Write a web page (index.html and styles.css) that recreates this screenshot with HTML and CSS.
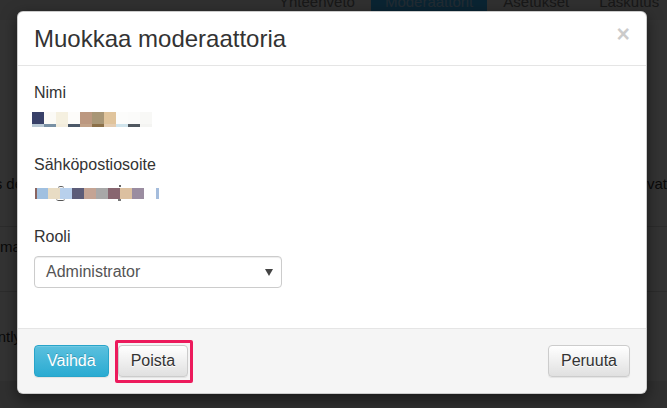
FILE: index.html
```html
<!DOCTYPE html>
<html lang="fi">
<head>
<meta charset="utf-8">
<title>Muokkaa moderaattoria</title>
<link rel="stylesheet" href="styles.css">
</head>
<body>
<div class="page">
  <nav class="topnav">
    <a class="nav-item">Yhteenveto</a>
    <a class="nav-item active">Moderaattorit</a>
    <a class="nav-item">Asetukset</a>
    <a class="nav-item">Laskutus</a>
  </nav>
  <div class="panel">
    <div class="trow head">
      <div class="cell-l to-end"><span>Tilaus de</span></div>
      <div class="cell-r"><span>vat</span></div>
    </div>
    <div class="trow mid">
      <div class="cell-l"><span>maksettu</span></div>
    </div>
    <div class="trow last">
      <div class="cell-l to-end short"><span>Recently</span></div>
    </div>
  </div>
</div>
<div class="backdrop"></div>
<div class="modal">
  <div class="modal-header">
    <h4 class="modal-title">Muokkaa moderaattoria</h4>
    <button class="close" type="button">×</button>
  </div>
  <div class="modal-body">
    <div class="form-group">
      <label>Nimi</label>
      <div class="pix name">
        <span></span><span></span><span></span><span></span><span></span>
        <span></span><span></span><span></span><span></span><span></span>
      </div>
    </div>
    <div class="form-group">
      <label>Sähköpostiosoite</label>
      <div class="pix email">
        <span class="mk"></span>
        <span class="b1"></span><span class="b2"></span><span class="b3"></span><span class="b4"></span><span class="b5"></span>
        <span class="b6"></span><span class="b7"></span><span class="b8"></span><span class="b9"></span><span class="b10"></span>
        <span class="tail"></span>
      </div>
    </div>
    <div class="form-group">
      <label>Rooli</label>
      <div class="select">
        <span>Administrator</span>
        <svg class="caret" width="8" height="7" viewBox="0 0 8 7"><polygon points="0,0 8,0 4,7" fill="#444"/></svg>
      </div>
    </div>
  </div>
  <div class="modal-footer">
    <button class="btn btn-info" type="button">Vaihda</button>
    <button class="btn btn-default marked" type="button">Poista</button>
    <button class="btn btn-default cancel" type="button">Peruuta</button>
  </div>
</div>
</body>
</html>
```
FILE: styles.css
```css
html, body {
  margin: 0;
  padding: 0;
}
body {
  width: 667px;
  height: 408px;
  overflow: hidden;
  position: relative;
  background: #eeeeee;
  font-family: "Liberation Sans", Arial, sans-serif;
  color: #333;
}

/* underlying page */
.page {
  display: flex;
  flex-direction: column;
}
.topnav {
  display: flex;
  height: 36px;
  margin-top: -16px;
  padding-left: 265px;
  font-size: 15px;
  line-height: 36px;
  white-space: nowrap;
}
.nav-item {
  padding: 0 14px;
  margin-right: 2px;
  color: #777;
}
.nav-item.active {
  background: #36b4fa;
  color: #a8d8f8;
}
.panel {
  background: #fff;
  padding-top: 120px;
  font-size: 15px;
}
.trow {
  display: flex;
  border-bottom: 1px solid #ddd;
  white-space: nowrap;
}
.trow.head {
  height: 86px;
  align-items: center;
}
.trow.mid {
  box-sizing: border-box;
  height: 65px;
  padding-top: 9px;
  line-height: 22px;
  align-items: flex-start;
}
.trow.last {
  height: 89px;
  align-items: center;
  border-bottom: 0;
}
.cell-l {
  width: 23px;
  display: flex;
  overflow: hidden;
}
.cell-l.to-end {
  justify-content: flex-end;
}
.cell-l.short {
  width: 21px;
}
.cell-r {
  margin-left: auto;
  width: 20px;
}

.backdrop {
  position: absolute;
  inset: 0;
  background: rgba(0, 0, 0, 0.8);
}

/* modal */
.modal {
  position: absolute;
  left: 17px;
  top: 11px;
  width: 630px;
  box-sizing: border-box;
  background: #fff;
  border: 1px solid rgba(0, 0, 0, 0.2);
  border-radius: 6px;
  box-shadow: 0 5px 15px rgba(0, 0, 0, 0.5);
  color: #333;
  font-size: 16px;
}
.modal-header {
  display: flex;
  justify-content: space-between;
  align-items: flex-start;
  padding: 14px 16px 13px 16px;
  border-bottom: 1px solid #e5e5e5;
}
.modal-title {
  margin: 0;
  font-size: 24px;
  line-height: 26px;
  font-weight: normal;
}
.close {
  border: 0;
  background: none;
  padding: 0;
  margin-top: -3px;
  font: bold 23px/1 "Liberation Sans", Arial, sans-serif;
  color: #000;
  opacity: 0.2;
}
.modal-body {
  display: flex;
  flex-direction: column;
  gap: 27px;
  padding: 16px 16px 40px 16px;
}
.form-group label {
  display: block;
  line-height: 22px;
  margin-bottom: 8px;
}
.pix {
  display: flex;
  height: 15px;
}
.name {
  margin-left: -2px;
}
.name span {
  width: 12px;
  height: 15px;
}
.name span:nth-child(1)  { background: linear-gradient(#384068 12px, #b8c8d4 12px); }
.name span:nth-child(2)  { background: linear-gradient(#fbfaf6 12px, #7890a4 12px); }
.name span:nth-child(3)  { background: linear-gradient(#f5f0e0 12px, #f2ecdc 12px); }
.name span:nth-child(4)  { background: linear-gradient(#fdfcfa 12px, #4c5868 12px); }
.name span:nth-child(5)  { background: linear-gradient(#bc9880 12px, #c2a288 12px); }
.name span:nth-child(6)  { background: linear-gradient(#a89676 12px, #8c7048 12px); }
.name span:nth-child(7)  { background: linear-gradient(#e0c49c 12px, #e4ccb0 12px); }
.name span:nth-child(8)  { background: linear-gradient(#fcfcfb 12px, #d0e4ec 12px); }
.name span:nth-child(9)  { background: linear-gradient(#fbfbfa 12px, #505860 12px); }
.name span:nth-child(10) { background: linear-gradient(#f8f8f6 12px, #f4f4f2 12px); }

.email {
  padding-top: 4px;
  height: 11px;
  margin-left: 1px;
}
.email span {
  width: 12px;
  height: 11px;
}
.email .mk   { width: 2px; background: #8a6460; }
.email .b1   { width: 11px; background: #a0c0e0; }
.email .b2   { background: #e8dcc4; }
.email .b3   { background: #b8d0ec; position: relative; }
.email .b4   { background: #5c5c78; }
.email .b5   { background: #c4a494; }
.email .b6   { background: #a8a8a8; }
.email .b7   { background: #886670; }
.email .b8   { background: #dcc0a0; position: relative; }
.email .b9   { background: #9a8ca0; }
.email .b10  { background: #fefefe; }
.email .tail { width: 3px; background: #a4bcdc; }

/* glyph remnants peeking out of the blurred blocks */
.email .b3::before {
  content: "";
  position: absolute;
  left: -2px;
  top: -2px;
  width: 6px;
  height: 3px;
  border-top: 1px solid #555;
  border-radius: 50% 50% 0 0;
}
.email .b3::after {
  content: "";
  position: absolute;
  left: -4px;
  bottom: -2px;
  width: 9px;
  height: 3px;
  border-bottom: 1px solid #555;
  border-radius: 0 0 50% 50%;
}
.email .b8::before {
  content: "";
  position: absolute;
  left: -1px;
  top: -3px;
  width: 2px;
  height: 2px;
  background: #666;
}
.email .b8::after {
  content: "";
  position: absolute;
  left: -2px;
  bottom: -2px;
  width: 3px;
  height: 2px;
  background: #777;
}

.select {
  display: flex;
  align-items: center;
  justify-content: space-between;
  width: 248px;
  height: 32px;
  box-sizing: border-box;
  border: 1px solid #ccc;
  border-radius: 4px;
  padding: 0 8px 0 11px;
  box-shadow: inset 0 1px 1px rgba(0, 0, 0, 0.075);
  color: #555;
  font-size: 16px;
}
.caret {
  display: block;
}

.modal-footer {
  display: flex;
  align-items: center;
  gap: 9px;
  padding: 16px;
  border-top: 1px solid #e5e5e5;
  background: #f5f5f5;
  border-radius: 0 0 6px 6px;
}
.btn {
  font: 16px/20px "Liberation Sans", Arial, sans-serif;
  padding: 5px 12px;
  border: 1px solid;
  border-radius: 4px;
  box-shadow: inset 0 1px 0 rgba(255, 255, 255, 0.15), 0 1px 1px rgba(0, 0, 0, 0.075);
}
.btn-info {
  color: #fff;
  background: linear-gradient(#5bc0de, #2aabd2);
  border-color: #28a4c9;
  text-shadow: 0 -1px 0 rgba(0, 0, 0, 0.2);
}
.btn-default {
  color: #333;
  background: linear-gradient(#fff, #e0e0e0);
  border-color: #ccc;
  text-shadow: 0 1px 0 #fff;
}
.cancel {
  margin-left: auto;
}
.marked {
  position: relative;
}
.marked::after {
  content: "";
  position: absolute;
  left: -4px;
  top: -6px;
  right: -6px;
  bottom: -7px;
  border: 3px solid #ec1a5c;
  border-radius: 2px;
}
```
